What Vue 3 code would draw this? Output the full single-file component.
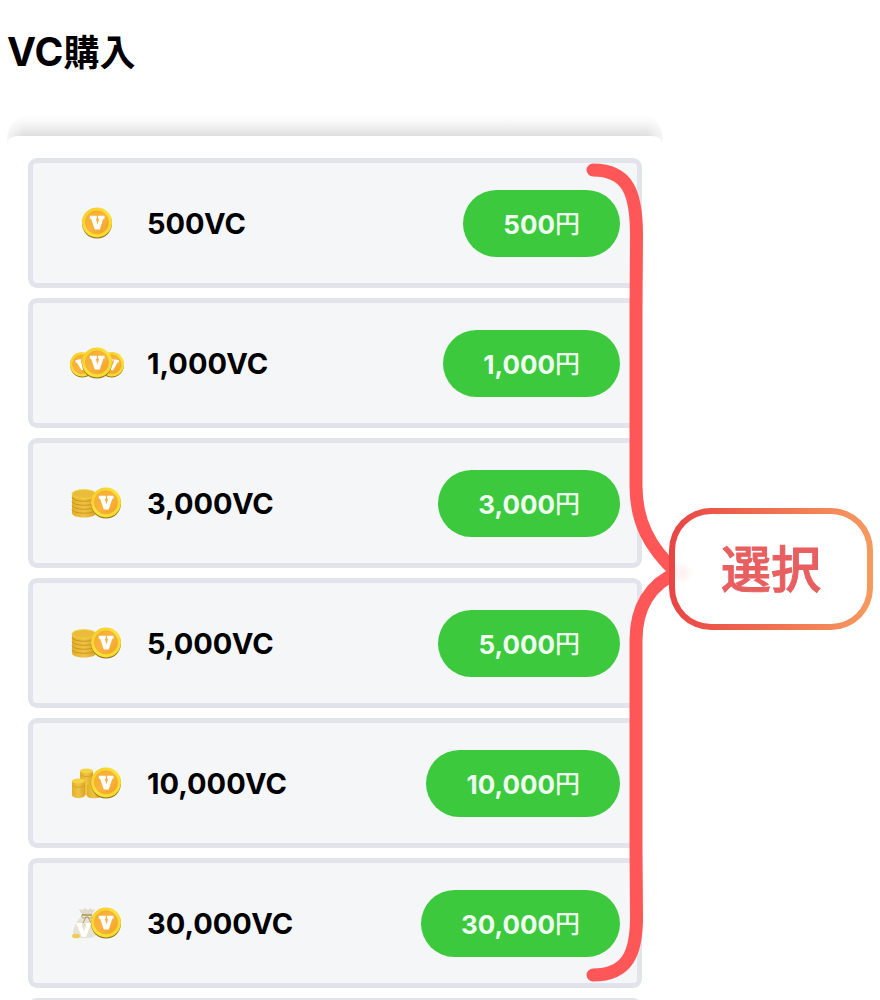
<script setup>
const items = [
  { amount: '500', icon: 'single' },
  { amount: '1,000', icon: 'triple' },
  { amount: '3,000', icon: 'stack' },
  { amount: '5,000', icon: 'stack' },
  { amount: '10,000', icon: 'piles' },
  { amount: '30,000', icon: 'bag' }
]
</script>

<template>
  <main class="page">
    <svg class="defs" width="0" height="0" aria-hidden="true">
      <defs>
        <linearGradient id="rim" x1="0" y1="0" x2="1" y2="1">
          <stop offset="0" stop-color="#f6c62c" />
          <stop offset="0.5" stop-color="#fde23a" />
          <stop offset="1" stop-color="#f3d52c" />
        </linearGradient>
        <linearGradient id="face" x1="0" y1="0" x2="1" y2="1">
          <stop offset="0" stop-color="#f6ac2b" />
          <stop offset="0.5" stop-color="#fbb340" />
          <stop offset="1" stop-color="#f2a021" />
        </linearGradient>
        <linearGradient id="side" x1="0" y1="0" x2="1" y2="0">
          <stop offset="0" stop-color="#e2b02a" />
          <stop offset="0.5" stop-color="#efc342" />
          <stop offset="1" stop-color="#dba428" />
        </linearGradient>
        <symbol id="coin" viewBox="0 0 32 32">
          <circle cx="16" cy="16.6" r="15" fill="#9a7a18" />
          <circle cx="16" cy="15.4" r="15" fill="url(#rim)" />
          <circle cx="16" cy="15.4" r="11.6" fill="url(#face)" stroke="#eeb026" stroke-width="0.7" />
          <path d="M8.800 8.800h7v3h-1l1.700 5.700 1.700-5.700h-1.100V8.800h6.400v3h-1.200L18.800 22.500h-5L10.100 11.800H8.800z" fill="#fff" />
        </symbol>
      </defs>
    </svg>

    <h1 class="title">VC<span>購入</span></h1>

    <div class="content">
      <div class="shade"></div>
      <section class="panel">
        <ul class="list">
          <li v-for="item in items" :key="item.amount" class="row">
            <svg class="icon" viewBox="0 0 60 40" aria-hidden="true">
              <template v-if="item.icon === 'single'">
                <use href="#coin" x="14" y="4" width="32" height="32" />
              </template>
              <template v-else-if="item.icon === 'triple'">
                <g transform="rotate(-12 14 21)"><use href="#coin" x="2" y="9" width="26" height="26" /></g>
                <g transform="rotate(12 46 21)"><use href="#coin" x="32" y="9" width="26" height="26" /></g>
                <use href="#coin" x="14" y="4" width="32" height="32" />
              </template>
              <template v-else-if="item.icon === 'stack'">
                <path d="M5 11v19c0 6 24 6 24 0V11z" fill="url(#side)" />
                <g fill="none" stroke="#c8921e" stroke-width="0.9">
                  <path d="M5 14.500c1 5 23 5 24 0M5 18.500c1 5 23 5 24 0M5 22.500c1 5 23 5 24 0M5 26.500c1 5 23 5 24 0" />
                </g>
                <ellipse cx="17" cy="11" rx="12" ry="4.300" fill="#e9bd3b" stroke="#f4d13c" />
                <use href="#coin" x="23" y="4" width="32" height="32" />
              </template>
              <template v-else-if="item.icon === 'piles'">
                <path d="M13 8v22c0 3 13 3 13 0V8z" fill="url(#side)" />
                <ellipse cx="19.500" cy="8" rx="6.500" ry="2.500" fill="#f5d342" />
                <path d="M20 22v11c0 3 14 3 14 0V22z" fill="url(#side)" />
                <path d="M5 18v14c0 4 13 4 13 0V18z" fill="url(#side)" />
                <path d="M5 22c1 3 12 3 13 0M14 12c2 2 10 2 12 0" fill="none" stroke="#d39d25" stroke-width="0.8" />
                <ellipse cx="11.500" cy="18" rx="6.500" ry="2.500" fill="#f5d342" />
                <use href="#coin" x="23" y="4" width="32" height="32" />
              </template>
              <template v-else>
                <path d="M15 13C9 18 6 25 6 31c0 5 21 6 24 0V19l-5-6z" fill="#e6e3d5" />
                <path d="M15 12l-3-6 4 1 2-2 3 2 3-2 1 2 3-1-3 6z" fill="#e0dbc8" />
                <path d="M15 12h10" stroke="#b59a60" stroke-width="1.5" />
                <path d="M20 13c-7-5-7 5 0 1c7 4 7-5 0-1M19 14l-3 6M21 14l3 6" fill="none" stroke="#b59a60" stroke-width="1" />
                <path d="M9 20h6v3l2 5 2-5v-3h5l-5 14h-4z" fill="#fff" />
                <ellipse cx="9" cy="33" rx="4" ry="2.300" fill="#f0cd52" />
                <use href="#coin" x="23" y="4" width="32" height="32" />
              </template>
            </svg>
            <span class="name">{{ item.amount }}VC</span>
            <button class="buy" type="button">{{ item.amount }}<span>円</span></button>
          </li>
          <li class="row" aria-hidden="true"></li>
        </ul>
      </section>

      <div class="callout">
        <svg class="brace" viewBox="0 0 100 830" aria-hidden="true">
          <path d="M13 20C48 20 56.500 43 56.500 85L56 160V336C56 371 69 397 97 423C70 434 56 458 56 490V700L56.500 765C57 804 47 825 13 825" />
        </svg>
        <div class="label"><span>選択</span></div>
      </div>
    </div>
  </main>
</template>

<style>
body {
  background: #fff;
}
</style>

<style scoped>
.page {
  box-sizing: border-box;
  height: 100vh;
  overflow: hidden;
  padding: 24px 7px 0;
  color: #000;
  font-family: Inter, "Noto Sans CJK JP", sans-serif;
}
.defs {
  position: absolute;
}
.title {
  height: 56px;
  margin: 0;
  font-size: 39px;
  line-height: 56px;
  font-weight: 700;
}
.title span {
  font-size: 36px;
}
.content {
  position: relative;
  margin: 34px 210px 0 0;
}
.shade {
  height: 32px;
  border-radius: 24px 24px 0 0;
  background: linear-gradient(#fff, #f8f8f8 8px, #dfdfdf 22px, #fff 32px);
  mask-image: linear-gradient(90deg, rgb(0 0 0 / 30%), #000 16px, #000 calc(100% - 16px), rgb(0 0 0 / 30%));
}
.panel {
  position: relative;
  margin-top: -10px;
  padding: 22px 21px;
  border-radius: 10px 10px 0 0;
  background: #fff;
}
.list {
  display: flex;
  flex-direction: column;
  gap: 10px;
  margin: 0;
  padding: 0;
  list-style: none;
}
.row {
  box-sizing: border-box;
  display: flex;
  align-items: center;
  min-height: 130px;
  padding: 0 17px 0 34px;
  border: 5px solid #e1e4ea;
  border-radius: 9px;
  background: #f4f6f8;
}
.icon {
  flex: none;
  width: 60px;
  height: 40px;
}
.name {
  flex: 1;
  padding: 2px 0 0 20px;
  font-size: 29px;
  line-height: 40px;
  font-weight: 700;
}
.buy {
  height: 67px;
  padding: 2px 40px 0;
  border: 0;
  border-radius: 34px;
  background: #3dc93d;
  color: #effff0;
  font: 700 26px/40px Inter, "Noto Sans CJK JP", sans-serif;
}
.buy span {
  font-size: 25px;
  font-weight: 500;
  vertical-align: 1px;
}
.callout {
  position: absolute;
  top: 36px;
  right: -210px;
  width: 293px;
  height: 830px;
  pointer-events: none;
}
.brace {
  position: absolute;
  left: 0;
  top: 0;
  width: 100px;
  height: 830px;
  overflow: visible;
}
.brace path {
  fill: none;
  stroke: #ff5757;
  stroke-width: 13;
  stroke-linecap: round;
  stroke-linejoin: round;
}
.label {
  position: absolute;
  right: 0;
  top: 358px;
  box-sizing: border-box;
  display: flex;
  align-items: center;
  justify-content: center;
  width: 204px;
  height: 122px;
  padding-bottom: 6px;
  border: 6px solid transparent;
  border-radius: 42px;
  background:
    radial-gradient(circle at 6px 59px, #fff3f2 4px, #fff 12px) padding-box,
    linear-gradient(90deg, #e94444, #f79a5e) border-box;
}
.label span {
  color: #e85f60;
  font: 500 50px/72px "Noto Sans CJK JP", sans-serif;
  -webkit-text-stroke: 1px #e85f60;
  stroke-linejoin: round;
}
</style>
